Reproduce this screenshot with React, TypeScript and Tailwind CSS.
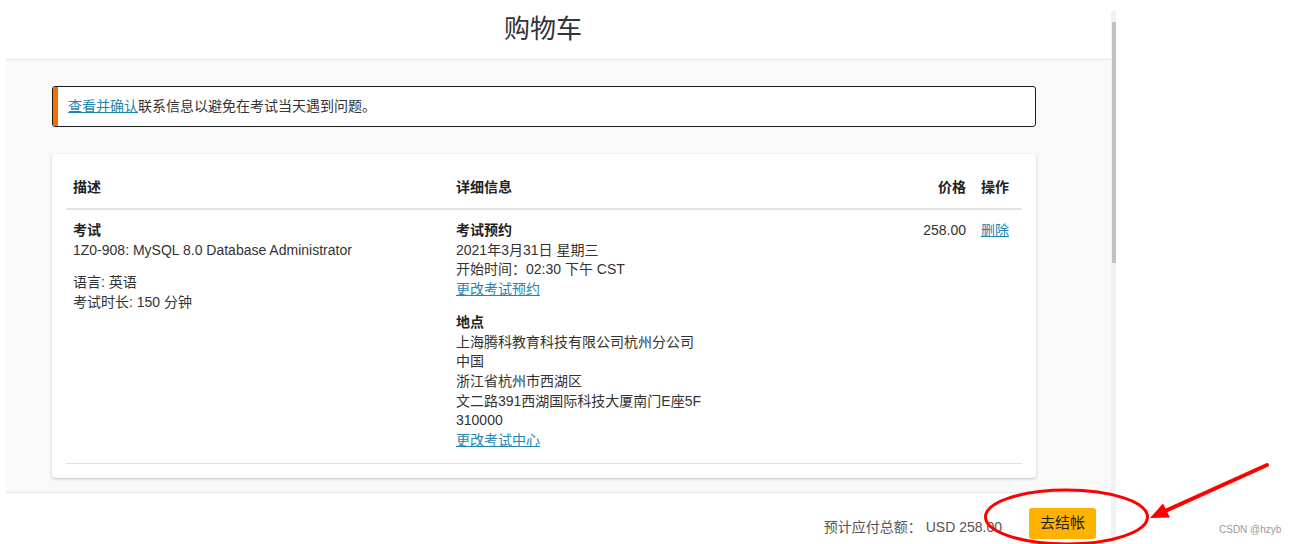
import React from "react";

const FONT = '"Liberation Sans", "Noto Sans CJK SC", Arial, sans-serif';

function Annotations() {
  return (
    <svg
      className="pointer-events-none absolute left-0 top-0"
      width="1290"
      height="544"
      viewBox="0 0 1290 544"
    >
      <ellipse cx="1066.5" cy="517" rx="81" ry="27" fill="none" stroke="#ff0000" strokeWidth="3" />
      <line x1="1267" y1="465" x2="1163" y2="512" stroke="#ff0000" strokeWidth="4" strokeLinecap="round" />
      <polygon points="1150,518 1170,517.5 1163,503.5" fill="#ff0000" />
    </svg>
  );
}

function CartTable() {
  return (
    <div className="rounded-[4px] bg-white px-[14px] pb-[14px] pt-[12px] shadow-[0_1px_3px_rgba(0,0,0,0.22)]">
      <div className="grid h-[44px] grid-cols-[383px_424px_100px_1fr] items-center border-b-2 border-[#e2e2e2] text-[14px] font-bold text-[#222]">
        <div className="pl-[7px]">描述</div>
        <div className="pl-[7px]">详细信息</div>
        <div className="pr-[7px] text-right">价格</div>
        <div className="pl-[8px]">操作</div>
      </div>

      <div className="grid grid-cols-[383px_424px_100px_1fr] border-b border-[#e2e2e2] pb-[12px] pt-[11px] text-[14px] leading-[19.7px] text-[#333]">
        <div className="pl-[7px]">
          <div className="font-bold text-[#222]">考试</div>
          <div>1Z0-908: MySQL 8.0 Database Administrator</div>
          <div className="mt-[13px]">语言: 英语</div>
          <div>考试时长: 150 分钟</div>
        </div>

        <div className="pl-[7px]">
          <div className="font-bold text-[#222]">考试预约</div>
          <div>2021年3月31日 星期三</div>
          <div>开始时间：02:30 下午 CST</div>
          <a href="#" className="text-[#1f86b0] underline">更改考试预约</a>

          <div className="mt-[13px] font-bold text-[#222]">地点</div>
          <div>上海腾科教育科技有限公司杭州分公司</div>
          <div>中国</div>
          <div>浙江省杭州市西湖区</div>
          <div>文二路391西湖国际科技大厦南门E座5F</div>
          <div>310000</div>
          <a href="#" className="text-[#1f86b0] underline">更改考试中心</a>
        </div>

        <div className="pr-[7px] text-right">258.00</div>
        <div className="pl-[8px]">
          <a href="#" className="text-[#1f86b0] underline">删除</a>
        </div>
      </div>
    </div>
  );
}

export default function App() {
  return (
    <div
      className="relative flex h-[544px] w-[1290px] overflow-hidden bg-white"
      style={{ fontFamily: FONT }}
    >
      <div className="w-[6px] shrink-0" />

      <div className="flex w-[1105px] shrink-0 flex-col">
        <div className="flex h-[59px] items-center justify-center pr-[31px]">
          <h1 className="text-[26px] font-normal text-[#333]">购物车</h1>
        </div>

        <div className="border-y border-[#e6e6e6] bg-[#f9f9f9] pb-[14px] pl-[46px] pr-[75px] pt-[26px]">
          <div className="flex h-[41px] overflow-hidden rounded-[3px] border border-[#1c1c1c] bg-white">
            <div className="w-[5px] shrink-0 bg-[#ff6a00]" />
            <div className="flex items-center pl-[10px] text-[14px] text-[#333]">
              <a href="#" className="text-[#1f86b0] underline">查看并确认</a>
              <span>联系信息以避免在考试当天遇到问题。</span>
            </div>
          </div>

          <div className="mt-[27px]">
            <CartTable />
          </div>
        </div>

        <div className="flex items-start justify-end pr-[15px] pt-[15px]">
          <div className="pt-[9px] text-[14px] text-[#555]">
            <span>预计应付总额：</span>
            <span className="ml-[4px]">USD 258.00</span>
          </div>
          <button className="ml-[27px] h-[31px] rounded-[3px] bg-[#ffb300] px-[11px] text-[15px] text-[#222]">
            去结帐
          </button>
        </div>
      </div>

      <div className="mt-[11px] w-[5px] shrink-0 bg-[#f1f1f1]">
        <div className="ml-[1px] mt-[11px] h-[241px] w-[4px] bg-[#c1c1c1]" />
      </div>

      <div className="absolute left-[1219px] top-[522px] text-[10px] text-[#9a9a9a]">CSDN @hzyb</div>

      <Annotations />
    </div>
  );
}
